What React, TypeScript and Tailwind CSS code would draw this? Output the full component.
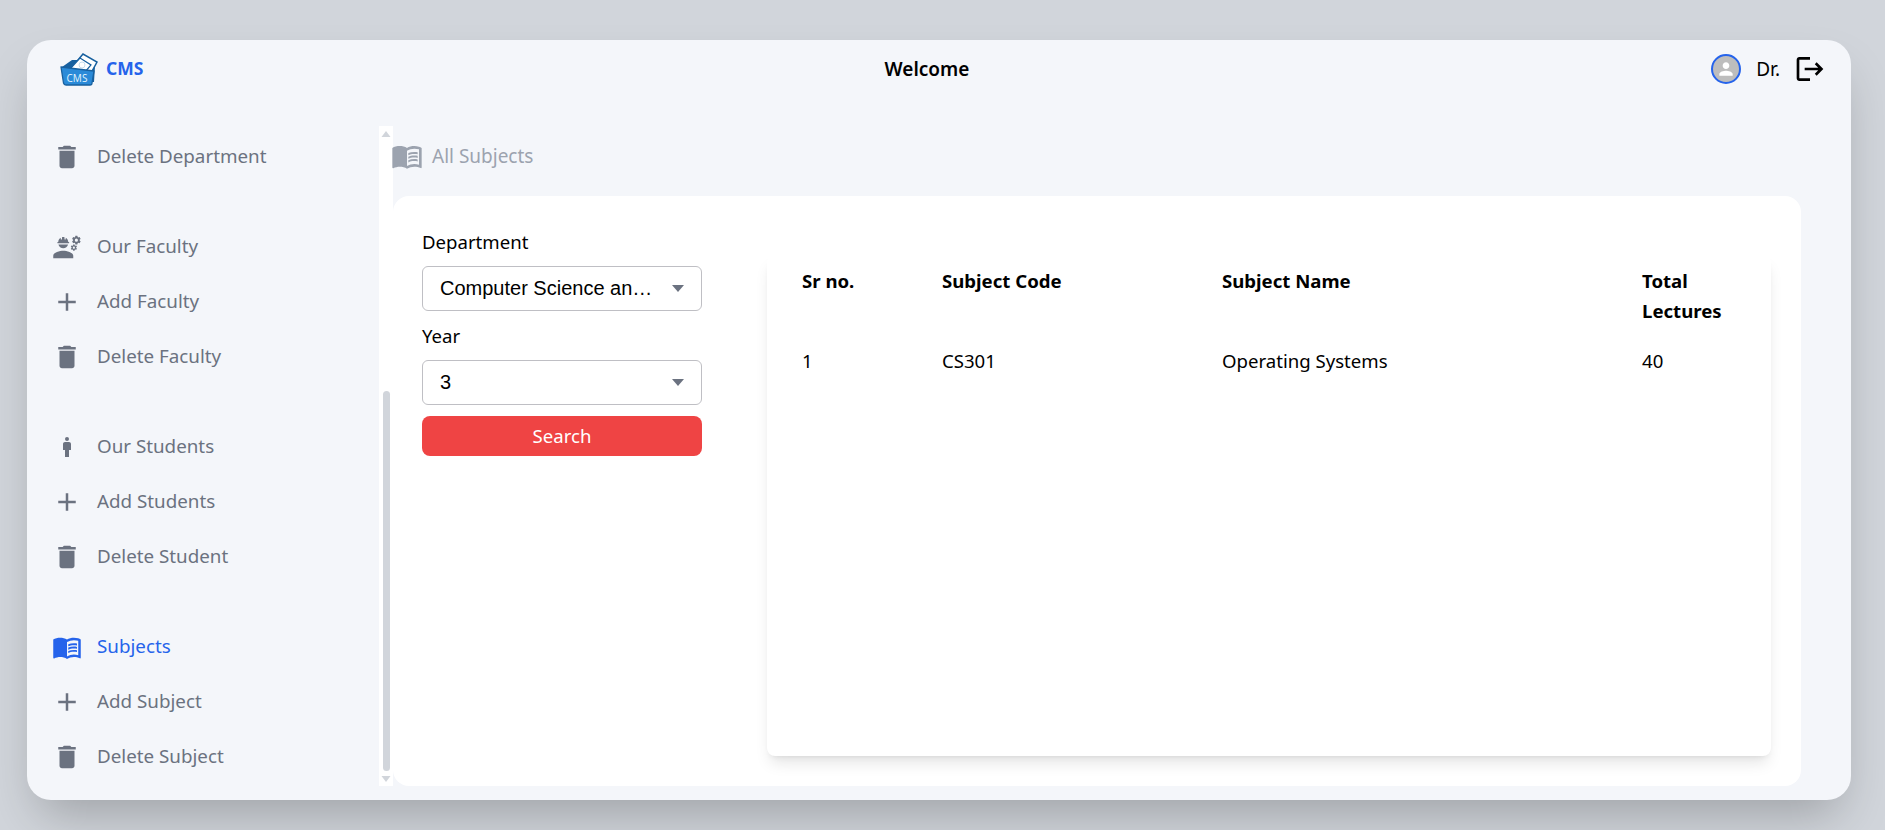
import { ReactNode } from 'react';
import { MdAdd, MdDelete, MdEngineering, MdLogout, MdMan, MdMenuBook, MdPerson } from 'react-icons/md';

const sans = { fontFamily: '"Noto Sans", sans-serif' };

function Logo() {
  return (
    <svg width="38" height="34" viewBox="0 0 38 34">
      {/* back of the folder */}
      <path d="M2 15 L12 8 L24 8 L35 14 L34 30 L6 30 Z" fill="#17609f" />
      {/* papers */}
      <path d="M13 14 L23 2 L37 10 L31 21 Z" fill="#fff" stroke="#17609f" strokeWidth="1.5" />
      <path d="M10 17 L20 6 L31 13 L25 20 Z" fill="#fff" stroke="#17609f" strokeWidth="1.2" />
      <circle cx="22" cy="13" r="3" fill="none" stroke="#b9d4ea" strokeWidth="0.8" />
      {/* front of the folder */}
      <path d="M1 15 L34 19 L32 31 Q32 33 30 33 L6 33 Q4 33 3.5 31 Z" fill="#2a8ad8" stroke="#17609f" strokeWidth="1.3" strokeLinejoin="round" />
      <text x="17" y="29.5" textAnchor="middle" fontSize="10" fill="#dff0fc" fontFamily="Noto Sans, sans-serif">CMS</text>
    </svg>
  );
}

function NavRow({ icon, label, active }: { icon: ReactNode; label: string; active?: boolean }) {
  return (
    <div className={`flex h-[55px] items-center text-[18.8px] ${active ? 'text-[#2563eb]' : 'text-[#6b7280]'}`}>
      <div className="flex w-[30px] justify-center text-[30px]">{icon}</div>
      <span className="ml-[15px] whitespace-nowrap">{label}</span>
    </div>
  );
}

function Caret() {
  return (
    <svg width="12" height="7" viewBox="0 0 12 7" className="shrink-0">
      <path d="M0 0 H12 L6 7 Z" fill="#6b7280" />
    </svg>
  );
}

function SelectBox({ value }: { value: string }) {
  return (
    <div className="flex h-[45px] w-full items-center rounded-md border border-[#bfbfc4] bg-white pl-[17px] pr-[17px]">
      <span className="min-w-0 flex-1 truncate pb-[2px] pr-[18px] text-[20px] text-black" style={{ fontFamily: '"Liberation Sans", sans-serif' }}>
        {value}
      </span>
      <Caret />
    </div>
  );
}

function Scrollbar() {
  return (
    <div className="flex w-[14px] shrink-0 flex-col items-center bg-white">
      <svg width="10" height="8" viewBox="0 0 10 8" className="mt-[4px] shrink-0">
        <path d="M5 1 L9.5 7 H0.5 Z" fill="#d1d5db" />
      </svg>
      <div className="min-h-0 flex-1" />
      <div className="h-[380px] w-[7px] shrink-0 rounded-full bg-[#d1d5db]" />
      <svg width="10" height="8" viewBox="0 0 10 8" className="mb-[3px] mt-[4px] shrink-0">
        <path d="M0.5 1 H9.5 L5 7 Z" fill="#d1d5db" />
      </svg>
    </div>
  );
}

const th = 'font-bold leading-[30px]';

export default function App() {
  return (
    <div className="flex h-[830px] w-full items-start justify-start overflow-hidden bg-[#d1d5db] pl-[27px] pt-[40px]" style={sans}>
      <div className="flex h-[760px] w-[1824px] shrink-0 flex-col overflow-hidden rounded-3xl bg-[#f4f6fa] shadow-2xl">
        {/* top bar */}
        <div className="flex h-[58px] shrink-0 items-center justify-between pl-[33px] pr-[25px]">
          <div className="flex w-[300px] items-center gap-[8px]">
            <Logo />
            <span className="pb-[2px] text-[17.5px] font-bold text-[#2563eb]">CMS</span>
          </div>
          <span className="text-[19px] font-semibold text-black">Welcome</span>
          <div className="flex w-[332px] items-center justify-end">
            <div className="flex h-[30px] w-[30px] items-center justify-center rounded-full border-2 border-[#2563eb] bg-[#bdbdbd] text-[20px] text-white">
              <MdPerson />
            </div>
            <span className="ml-[15px] text-[19px] text-black">Dr.</span>
            <MdLogout className="ml-[14px] text-[32px] text-black" />
          </div>
        </div>

        <div className="flex min-h-0 flex-1 pt-[28px] pb-[14px]">
          {/* sidebar */}
          <div className="w-[352px] shrink-0 overflow-hidden pl-[25px] pt-[3px]">
            <NavRow icon={<MdDelete />} label="Delete Department" />
            <div className="mt-[35px]">
              <NavRow icon={<MdEngineering />} label="Our Faculty" />
              <NavRow icon={<MdAdd />} label="Add Faculty" />
              <NavRow icon={<MdDelete />} label="Delete Faculty" />
            </div>
            <div className="mt-[35px]">
              <NavRow icon={<MdMan className="text-[24px]" />} label="Our Students" />
              <NavRow icon={<MdAdd />} label="Add Students" />
              <NavRow icon={<MdDelete />} label="Delete Student" />
            </div>
            <div className="mt-[35px]">
              <NavRow icon={<MdMenuBook />} label="Subjects" active />
              <NavRow icon={<MdAdd />} label="Add Subject" />
              <NavRow icon={<MdDelete />} label="Delete Subject" />
            </div>
          </div>
          <Scrollbar />

          {/* main */}
          <div className="flex min-w-0 flex-1 flex-col pr-[50px]">
            <div className="flex h-[70px] shrink-0 items-start pt-[14px] text-[#9ca3af]">
              <div className="-ml-[2px] flex items-center gap-[9px]">
                <MdMenuBook className="text-[32px]" />
                <span className="text-[19px]">All Subjects</span>
              </div>
            </div>
            <div className="flex min-h-0 flex-1 rounded-2xl bg-white pl-[29px] pr-[30px] pb-[30px] pt-[24px]">
              <div className="w-[280px] shrink-0 text-[18.6px] text-black">
                <div className="flex h-[46px] items-center pb-[2px]">Department</div>
                <SelectBox value="Computer Science and Engineering" />
                <div className="flex h-[49px] items-center">Year</div>
                <SelectBox value="3" />
                <button className="mt-[11px] h-[40px] w-full rounded-lg bg-[#ef4444] text-[18.6px] text-white">Search</button>
              </div>
              <div className="ml-[65px] mt-[35px] min-w-0 flex-1 rounded-lg bg-white px-[35px] pt-[11px] text-[18.6px] text-black shadow-lg">
                <div className="grid grid-cols-[140px_280px_420px_1fr]">
                  <div className={th}>Sr no.</div>
                  <div className={th}>Subject Code</div>
                  <div className={th}>Subject Name</div>
                  <div className={th}>Total Lectures</div>
                  <div className="pt-[20px] leading-[30px]">1</div>
                  <div className="pt-[20px] leading-[30px]">CS301</div>
                  <div className="pt-[20px] leading-[30px]">Operating Systems</div>
                  <div className="pt-[20px] leading-[30px]">40</div>
                </div>
              </div>
            </div>
          </div>
        </div>
      </div>
    </div>
  );
}
